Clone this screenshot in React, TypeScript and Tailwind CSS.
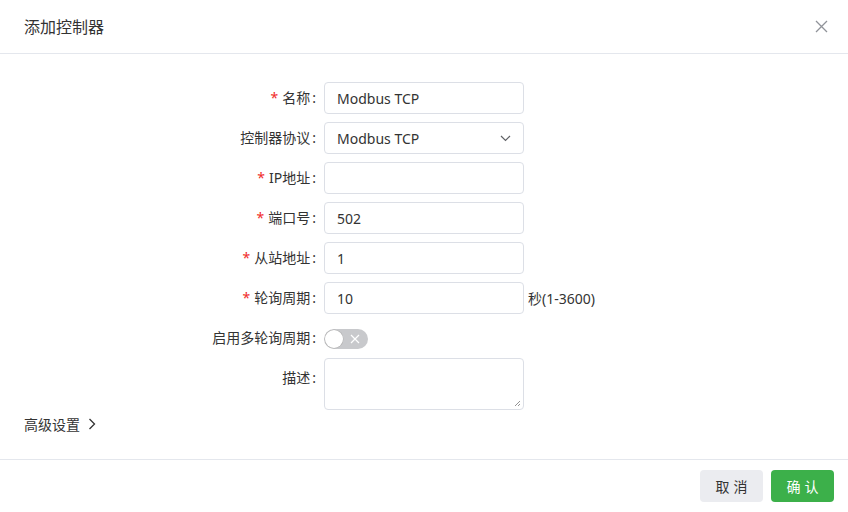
import React from "react";

const font = { fontFamily: '"Noto Sans", "Noto Sans CJK SC", sans-serif' };

function Label({ text, required }: { text: string; required?: boolean }) {
  return (
    <div className="w-[300px] shrink-0 pr-[8px] text-right text-[14px] leading-8 text-[#333]">
      {required && <span className="mr-[4px] text-[#f02b2b]">*</span>}
      {text}
      <span className="ml-[2px]">:</span>
    </div>
  );
}

function Input({ value }: { value?: string }) {
  return (
    <div className="flex h-8 w-[200px] items-center rounded-[4px] border border-[#dcdfe6] bg-white px-3 text-[14px] text-[#333]">
      {value}
    </div>
  );
}

export default function App() {
  return (
    <div className="h-[512px] w-[848px] bg-white flex flex-col" style={font}>
      <div className="flex h-[54px] shrink-0 items-center justify-between border-b border-[#e4e7ed] pl-[24px] pr-[20px]">
        <div className="text-[16px] text-[#333]">添加控制器</div>
        <svg width="13" height="13" viewBox="0 0 13 13" className="mr-[0px]">
          <path d="M1 1 L12 12 M12 1 L1 12" stroke="#909399" strokeWidth="1.3" fill="none" />
        </svg>
      </div>
      <div className="flex-1 px-[24px] pt-[28px]">
        <div className="flex flex-col gap-[8px]">
          <div className="flex items-center">
            <Label text="名称" required />
            <Input value="Modbus TCP" />
          </div>
          <div className="flex items-center">
            <Label text="控制器协议" />
            <div className="flex h-8 w-[200px] items-center justify-between rounded-[4px] border border-[#dcdfe6] bg-white pl-3 pr-[12px] text-[14px] text-[#333]">
              <span>Modbus TCP</span>
              <svg width="11" height="7" viewBox="0 0 11 7">
                <path d="M1 1 L5.5 5.5 L10 1" stroke="#606266" strokeWidth="1.2" fill="none" />
              </svg>
            </div>
          </div>
          <div className="flex items-center">
            <Label text="IP地址" required />
            <Input />
          </div>
          <div className="flex items-center">
            <Label text="端口号" required />
            <Input value="502" />
          </div>
          <div className="flex items-center">
            <Label text="从站地址" required />
            <Input value="1" />
          </div>
          <div className="flex items-center">
            <Label text="轮询周期" required />
            <Input value="10" />
            <span className="ml-[4px] text-[14px] text-[#333]">秒(1-3600)</span>
          </div>
          <div className="flex items-center">
            <Label text="启用多轮询周期" />
            <div className="relative mt-[1px] flex h-[20px] w-[44px] items-center rounded-full bg-[#c8c9cc]">
              <div className="absolute left-[1px] top-[1px] h-[18px] w-[18px] rounded-full bg-white shadow-[0_0_0_0.5px_#b0b0b0]" />
              <svg width="10" height="10" viewBox="0 0 10 10" className="absolute left-[26px] top-[5px]">
                <path d="M1 1 L9 9 M9 1 L1 9" stroke="#ffffff" strokeWidth="1.2" fill="none" />
              </svg>
            </div>
          </div>
          <div className="-mt-[4px] flex items-start">
            <div className="mt-[4px]">
              <Label text="描述" />
            </div>
            <div className="relative h-[52px] w-[200px] rounded-[4px] border border-[#dcdfe6] bg-white">
              <svg width="7" height="7" viewBox="0 0 7 7" className="absolute bottom-[2px] right-[2px]">
                <path d="M6 1 L1 6 M6 4 L4 6" stroke="#888" strokeWidth="0.9" fill="none" />
              </svg>
            </div>
          </div>
        </div>
        <div className="mt-[4px] flex h-[20px] items-center text-[14px] text-[#333]">
          <span>高级设置</span>
          <svg width="8" height="12" viewBox="0 0 8 12" className="ml-[8px]">
            <path d="M1.5 1 L6.5 6 L1.5 11" stroke="#333" strokeWidth="1.3" fill="none" />
          </svg>
        </div>
      </div>
      <div className="flex h-[53px] shrink-0 items-center justify-end gap-[8px] border-t border-[#e4e7ed] pr-[14px]">
        <button className="h-8 w-[63px] rounded-[4px] bg-[#ebecf0] text-[14px] tracking-[4px] text-[#333]">
          <span className="ml-[4px]">取消</span>
        </button>
        <button className="h-8 w-[63px] rounded-[4px] bg-[#3cb04a] text-[14px] tracking-[4px] text-white">
          <span className="ml-[4px]">确认</span>
        </button>
      </div>
    </div>
  );
}
